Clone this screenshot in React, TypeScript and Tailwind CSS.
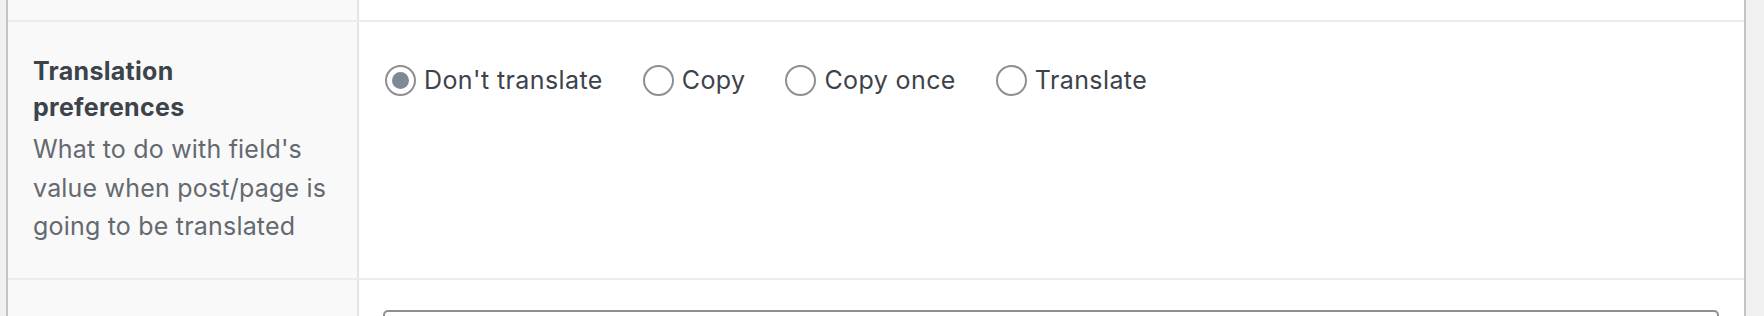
import React from 'react';

const options = [
  { label: "Don't translate", checked: true },
  { label: 'Copy', checked: false },
  { label: 'Copy once', checked: false },
  { label: 'Translate', checked: false },
];

function Radio({ checked }: { checked: boolean }) {
  return (
    <span className="flex h-[31px] w-[31px] shrink-0 items-center justify-center rounded-full border-2 border-[#8c8f94] bg-white">
      {checked && <span className="h-[17px] w-[17px] rounded-full bg-[#7e8993]" />}
    </span>
  );
}

export default function App() {
  return (
    <div
      className="h-[316px] w-[1764px] overflow-hidden bg-[#f0f0f1] pl-[6px]"
      style={{ fontFamily: 'Inter, "Noto Sans", sans-serif' }}
    >
      <div className="w-[1740px] border-x-2 border-[#c3c4c7] bg-white">
        {/* previous row (cut off) */}
        <div className="flex h-[22px] border-b-2 border-[#ececec]">
          <div className="w-[351px] shrink-0 border-r-2 border-[#e2e4e7] bg-[#f9f9f9]" />
          <div className="flex-1" />
        </div>

        {/* translation preferences */}
        <div className="flex h-[258px] border-b-2 border-[#ececec]">
          <div className="w-[351px] shrink-0 border-r-2 border-[#e2e4e7] bg-[#f9f9f9] pl-[25px] pr-4 pt-[31px]">
            <div className="text-[25px] font-bold leading-[36px] tracking-[0.3px] text-[#3c434a]">
              Translation
              <br />
              preferences
            </div>
            <p className="mt-[5px] text-[25px] leading-[38.5px] tracking-[0.2px] text-[#646970]">
              What to do with field's value when post/page is going to be translated
            </p>
          </div>
          <div className="flex-1 pl-[26px] pt-[40px]">
            <div className="flex items-center gap-[40px]">
              {options.map((o) => (
                <label key={o.label} className="flex items-center gap-[8px]">
                  <Radio checked={o.checked} />
                  <span className="text-[25px] leading-[36px] tracking-[0.4px] text-[#3c434a]">{o.label}</span>
                </label>
              ))}
            </div>
          </div>
        </div>

        {/* next row (cut off) */}
        <div className="flex h-[60px]">
          <div className="w-[351px] shrink-0 border-r-2 border-[#e2e4e7] bg-[#f9f9f9] pl-[25px] pt-[28px]">
            <span className="text-[25px] font-bold leading-[36px] text-[#3c434a]">Placeholder</span>
          </div>
          <div className="flex-1 pl-[24px] pr-[25px] pt-[30px]">
            <div className="h-[48px] rounded-[5px] border-2 border-[#8c8f94] bg-white" />
          </div>
        </div>
      </div>
    </div>
  );
}
